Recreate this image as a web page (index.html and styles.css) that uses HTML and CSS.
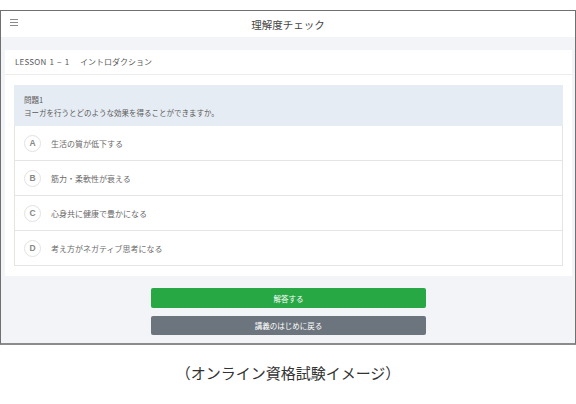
FILE: index.html
```html
<!DOCTYPE html>
<html lang="ja">
<head>
    <meta charset="UTF-8">
    <meta name="viewport" content="width=device-width, initial-scale=1.0">
    <title>理解度チェック</title>
    <link rel="stylesheet" href="styles.css">
</head>
<body>
    <div class="screen">
        <div class="topbar">
            <span class="menu-icon">
                <svg width="8" height="7" viewBox="0 0 8 7">
                    <rect x="0" y="0" width="8" height="1" fill="#8a8a8a"/>
                    <rect x="0" y="3" width="8" height="1" fill="#8a8a8a"/>
                    <rect x="0" y="6" width="8" height="1" fill="#8a8a8a"/>
                </svg>
            </span>
            <h1 class="title">理解度チェック</h1>
        </div>

        <div class="content">
            <div class="card">
                <div class="lesson"><span class="lesson-no">LESSON 1 − 1</span>イントロダクション</div>
                <div class="quiz">
                    <div class="question">
                        <div class="question-no">問題1</div>
                        <div>ヨーガを行うとどのような効果を得ることができますか。</div>
                    </div>
                    <ul class="options">
                        <li class="option"><span class="letter">A</span>生活の質が低下する</li>
                        <li class="option"><span class="letter">B</span>筋力・柔軟性が衰える</li>
                        <li class="option"><span class="letter">C</span>心身共に健康で豊かになる</li>
                        <li class="option"><span class="letter">D</span>考え方がネガティブ思考になる</li>
                    </ul>
                </div>
            </div>

            <div class="actions">
                <button class="button button-answer">解答する</button>
                <button class="button button-back">講義のはじめに戻る</button>
            </div>
        </div>
    </div>

    <p class="caption">（オンライン資格試験イメージ）</p>
</body>
</html>
```

FILE: styles.css
```css
body {
    margin: 0;
    background-color: #ffffff;
    font-family: "Noto Sans CJK JP", "Noto Sans", sans-serif;
    color: #555555;
}

.screen {
    margin-top: 10px;
    width: 574px;
    border: 1px solid #707070;
    border-bottom: 2px solid #8c8c8c;
    background-color: #f2f4f7;
}

.topbar {
    position: relative;
    height: 26px;
    background-color: #ffffff;
    display: flex;
    align-items: center;
    justify-content: center;
}

.menu-icon {
    position: absolute;
    left: 9px;
    top: 8px;
    line-height: 0;
}

.title {
    margin: 0;
    font-size: 10.5px;
    font-weight: normal;
    color: #444444;
}

.content {
    padding: 13px 3px 8px 4px;
}

.card {
    background-color: #ffffff;
    padding-bottom: 10px;
}

.lesson {
    height: 24px;
    line-height: 24px;
    padding-left: 10px;
    font-size: 8px;
    color: #5a5a5a;
    border-bottom: 1px solid #ececec;
}

.lesson-no {
    display: inline-block;
    width: 65px;
    letter-spacing: 0.2px;
    word-spacing: 1px;
}

.quiz {
    padding: 10px 9px 0 9px;
}

.question {
    background-color: #e6ecf3;
    padding: 8px 10px 7px;
    font-size: 7.5px;
    line-height: 13px;
    color: #5a5a5a;
}

.options {
    list-style-type: none;
    margin: 0;
    padding: 0;
    border: 1px solid #e4e4e4;
    border-top: none;
}

.option {
    height: 34px;
    display: flex;
    align-items: center;
    padding-left: 9px;
    font-size: 8px;
    color: #6a6a6a;
    border-top: 1px solid #e4e4e4;
}

.option:first-child {
    border-top: none;
}

.letter {
    width: 15px;
    height: 15px;
    border: 1px solid #e2e2e2;
    border-radius: 50%;
    display: flex;
    align-items: center;
    justify-content: center;
    margin-right: 10px;
    font-family: "Liberation Sans", Arial, sans-serif;
    font-size: 8.5px;
    font-weight: bold;
    color: #888888;
}

.actions {
    display: flex;
    flex-direction: column;
    align-items: center;
    gap: 8px;
    margin-top: 12px;
}

.button {
    width: 275px;
    height: 20px;
    border: none;
    border-radius: 2px;
    font-family: "Noto Sans CJK JP", sans-serif;
    font-size: 7.5px;
    color: #ffffff;
    cursor: pointer;
}

.button-answer {
    background-color: #28a745;
}

.button-back {
    height: 19px;
    background-color: #6c757d;
}

.caption {
    margin: 17px 0 0;
    text-align: center;
    font-size: 15px;
    color: #333333;
}
```
